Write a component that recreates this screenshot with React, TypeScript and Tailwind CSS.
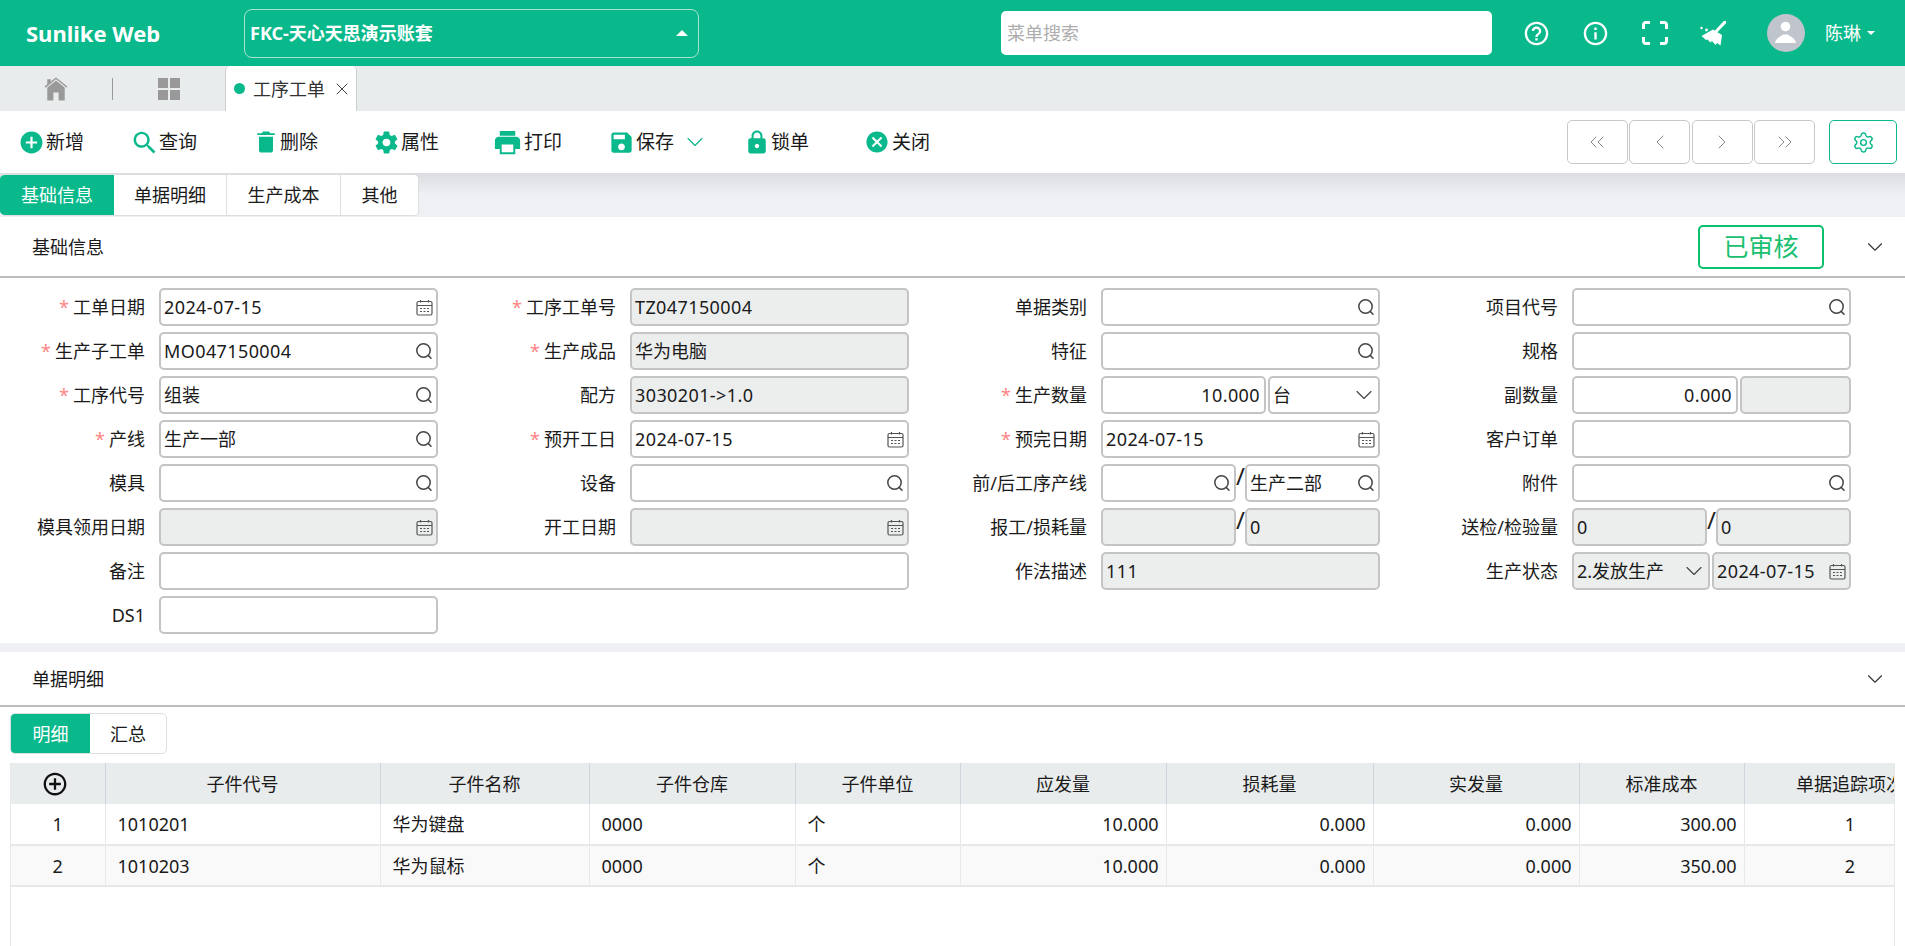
import type { ReactNode } from "react";
import {
  IoMdAddCircle,
  IoMdSearch,
  IoMdTrash,
  IoMdSettings,
  IoMdPrint,
  IoMdSave,
  IoMdLock,
  IoMdCloseCircle,
  IoIosHome,
  IoMdHelpCircleOutline,
  IoMdInformationCircleOutline,
  IoMdQrScanner,
  IoMdAddCircleOutline,
} from "react-icons/io";
import {
  ChevronDown,
  ChevronLeft,
  ChevronRight,
  ChevronsLeft,
  ChevronsRight,
  Settings,
  X,
} from "lucide-react";

const font = "font-['Noto_Sans','Noto_Sans_CJK_SC',sans-serif]";

function SearchGlyph() {
  return (
    <svg width="18" height="18" viewBox="0 0 18 18" fill="none" stroke="#444" strokeWidth="1.5" className="shrink-0">
      <circle cx="8.5" cy="8.5" r="6.7" />
      <path d="M13.2 13.4 L16 16.2" strokeLinecap="round" />
    </svg>
  );
}

function CalendarGlyph() {
  return (
    <svg width="17" height="17" viewBox="0 0 17 17" fill="none" stroke="#555" strokeWidth="1.2" className="shrink-0">
      <rect x="1" y="2.5" width="15" height="13.5" rx="1.5" />
      <path d="M1 6.5 H16 M4.5 1 V3.5 M12.5 1 V3.5" />
      <path d="M4 9.5 H6 M7.5 9.5 H9.5 M11 9.5 H13 M4 12.5 H6 M7.5 12.5 H9.5 M11 12.5 H13" strokeWidth="1" />
    </svg>
  );
}

function BroomGlyph() {
  return (
    <svg width="26" height="25" viewBox="0 0 26 25" fill="white" className="shrink-0">
      <path d="M25 1 L16.5 10" stroke="white" strokeWidth="3" strokeLinecap="round" />
      <path d="M1.5 15 L13 8.5 L22 14 L20.5 24.5 L17 22 L15.5 24 L12 20 L10.5 21.5 L7.5 18.5 L6 19 Z" />
      <circle cx="1.5" cy="7" r="1.2" />
      <circle cx="6.5" cy="9" r="1.4" />
    </svg>
  );
}

type Addon = "search" | "date" | "select" | undefined;

function Field({
  value = "",
  addon,
  disabled,
  right,
  className = "w-full",
}: {
  value?: string;
  addon?: Addon;
  disabled?: boolean;
  right?: boolean;
  className?: string;
}) {
  // the digits in the reference run a little wider than Noto's
  const latin = /^[\x20-\x7e]+$/.test(value);
  return (
    <div
      className={`flex h-[38px] shrink-0 items-center rounded-[5px] border-2 border-[#c4c4c4] pl-[3px] pr-[3px] ${
        disabled ? "bg-[#eceeee]" : "bg-white"
      } ${className}`}
    >
      <span
        className={`min-w-0 flex-1 whitespace-nowrap text-[#1a1a1a] ${latin ? "tracking-[0.4px]" : ""} ${
          right ? "pr-[1px] text-right" : ""
        }`}
      >
        {value}
      </span>
      {addon === "search" && <SearchGlyph />}
      {addon === "date" && <CalendarGlyph />}
      {addon === "select" && <ChevronDown size={28} strokeWidth={1} color="#444" className="-mr-[3px] shrink-0" />}
    </div>
  );
}

function Slash() {
  return <span className="flex h-[38px] w-[9px] shrink-0 justify-center text-[24px] text-[#222]">/</span>;
}

function Row({
  label,
  required,
  children,
  wide,
}: {
  label: string;
  required?: boolean;
  children: ReactNode;
  wide?: boolean;
}) {
  return (
    <div className={`flex h-[38px] ${wide ? "col-span-2" : ""}`}>
      <label className="flex h-[38px] w-[145px] shrink-0 items-center justify-end text-[#1a1a1a]">
        {required && <span className="mr-[4px] text-[#ff8585]">*</span>}
        {label}
      </label>
      <div className={`ml-[14px] flex h-[38px] ${wide ? "w-[750px]" : "w-[279px]"}`}>{children}</div>
    </div>
  );
}

const tools = [
  { label: "新增", icon: <IoMdAddCircle size={27} />, width: "w-[113px]", box: "w-[22px]" },
  { label: "查询", icon: <IoMdSearch size={29} />, width: "w-[123px]", box: "w-[22px]" },
  { label: "删除", icon: <IoMdTrash size={28} />, width: "w-[119px]", box: "w-[20px]" },
  { label: "属性", icon: <IoMdSettings size={27} />, width: "w-[120px]", box: "w-[22px]" },
  { label: "打印", icon: <IoMdPrint size={31} />, width: "w-[115px]", box: "w-[25px]" },
  { label: "保存", icon: <IoMdSave size={27} />, width: "w-[137px]", box: "w-[22px]", more: true },
  { label: "锁单", icon: <IoMdLock size={28} />, width: "w-[119px]", box: "w-[20px]" },
  { label: "关闭", icon: <IoMdCloseCircle size={26} />, width: "w-[100px]", box: "w-[22px]" },
];

const columns = [
  { label: "", width: "w-[94px]" },
  { label: "子件代号", width: "w-[275px]" },
  { label: "子件名称", width: "w-[209px]" },
  { label: "子件仓库", width: "w-[206px]" },
  { label: "子件单位", width: "w-[165px]" },
  { label: "应发量", width: "w-[206px]" },
  { label: "损耗量", width: "w-[207px]" },
  { label: "实发量", width: "w-[206px]" },
  { label: "标准成本", width: "w-[165px]" },
  { label: "单据追踪项次", width: "w-[212px]" },
];

const rows = [
  ["1", "1010201", "华为键盘", "0000", "个", "10.000", "0.000", "0.000", "300.00", "1"],
  ["2", "1010203", "华为鼠标", "0000", "个", "10.000", "0.000", "0.000", "350.00", "2"],
];

function PagerButton({ children }: { children: ReactNode }) {
  return (
    <button className="flex h-[44px] w-[61px] items-center justify-center rounded-[5px] border border-[#c8c8c8] bg-white text-[#888]">
      {children}
    </button>
  );
}

export default function App() {
  return (
    <div className={`flex h-[946px] w-[1905px] flex-col overflow-hidden bg-white text-[18px] leading-none ${font}`}>
      {/* top bar */}
      <header className="flex h-[66px] shrink-0 items-center bg-[#09b88b] text-white">
        <div className="ml-[26px] w-[218px] text-[22px] font-bold">Sunlike Web</div>
        <div className="flex h-[49px] w-[455px] items-center justify-between rounded-[8px] border border-[#a8e3d2] pl-[5px] pr-[10px]">
          <span className="font-bold">FKC-天心天思演示账套</span>
          <span className="h-0 w-0 border-x-[6px] border-b-[6px] border-x-transparent border-b-white" />
        </div>
        <div className="ml-[302px] flex h-[44px] w-[491px] items-center rounded-[5px] bg-white pl-[6px] text-[#aeaeae]">
          菜单搜索
        </div>
        <div className="ml-[30px] flex w-[28px] justify-center">
          <IoMdHelpCircleOutline size={29} className="shrink-0" />
        </div>
        <div className="ml-[31px] flex w-[28px] justify-center">
          <IoMdInformationCircleOutline size={29} className="shrink-0" />
        </div>
        <div className="ml-[31px] flex w-[30px] justify-center">
          <IoMdQrScanner size={32} className="shrink-0" />
        </div>
        <div className="ml-[30px] flex w-[26px] justify-center">
          <BroomGlyph />
        </div>
        <div className="ml-[41px] flex h-[38px] w-[38px] items-center justify-center rounded-full bg-[#c0c4cc]">
          <svg width="38" height="38" viewBox="0 0 38 38" fill="white">
            <circle cx="18.5" cy="12.5" r="4.8" />
            <path d="M8 29 C9 24 13 23 16 20.5 L21 20.5 C24 23 28 24 29 29 Z" />
          </svg>
        </div>
        <span className="ml-[20px]">陈琳</span>
        <span className="ml-[6px] h-0 w-0 border-x-[4px] border-t-[4px] border-x-transparent border-t-white" />
      </header>

      {/* open pages */}
      <div className="flex h-[45px] shrink-0 items-center bg-[#e9ecec]">
        <div className="ml-[42px] text-[#999]">
          <IoIosHome size={28} />
        </div>
        <div className="ml-[42px] h-[22px] w-px bg-[#999]" />
        <div className="ml-[45px] grid h-[22px] w-[22px] grid-cols-2 gap-[2px]">
          <span className="bg-[#999]" />
          <span className="bg-[#999]" />
          <span className="bg-[#999]" />
          <span className="bg-[#999]" />
        </div>
        <div className="ml-[45px] flex h-[45px] w-[132px] items-center rounded-t-[5px] border-x border-[#cfcfcf] bg-white pl-[8px]">
          <span className="h-[11px] w-[11px] rounded-full bg-[#09b88b]" />
          <span className="ml-[8px] text-[#333]">工序工单</span>
          <X size={20} strokeWidth={1.1} color="#333" className="ml-[7px] shrink-0" />
        </div>
      </div>

      {/* toolbar */}
      <div className="flex h-[62px] shrink-0 items-center bg-white pl-[20px] pr-[8px]">
        {tools.map((t) => (
          <button key={t.label} className={`flex shrink-0 items-center text-[19px] text-[#1a1a1a] ${t.width}`}>
            <span className={`flex shrink-0 justify-center text-[#09b88b] [&>svg]:shrink-0 ${t.box}`}>{t.icon}</span>
            <span className="ml-[4px]">{t.label}</span>
            {t.more && <ChevronDown size={28} strokeWidth={1} color="#09b88b" className="ml-[7px] shrink-0" />}
          </button>
        ))}
        <div className="ml-auto flex gap-[1.5px]">
          <PagerButton>
            <ChevronsLeft size={24} strokeWidth={1} />
          </PagerButton>
          <PagerButton>
            <ChevronLeft size={24} strokeWidth={1} />
          </PagerButton>
          <PagerButton>
            <ChevronRight size={24} strokeWidth={1} />
          </PagerButton>
          <PagerButton>
            <ChevronsRight size={24} strokeWidth={1} />
          </PagerButton>
        </div>
        <button className="ml-[14px] flex h-[44px] w-[68px] items-center justify-center rounded-[5px] border border-[#09b88b] text-[#09b88b]">
          <Settings size={23} strokeWidth={1.5} />
        </button>
      </div>

      {/* section tabs */}
      <div className="flex h-[44px] shrink-0 items-center bg-gradient-to-b from-[#dcdde1] via-[#eff0f4] to-[#eff0f4]">
        <div className="flex h-[42px] overflow-hidden rounded-[5px] border border-l-0 border-[#dcdee2] bg-white text-[#1a1a1a]">
          <span className="flex w-[114px] items-center justify-center bg-[#09b88b] text-white">基础信息</span>
          <span className="flex w-[113px] items-center justify-center border-r border-[#dcdee2]">单据明细</span>
          <span className="flex w-[114px] items-center justify-center border-r border-[#dcdee2]">生产成本</span>
          <span className="flex w-[77px] items-center justify-center">其他</span>
        </div>
      </div>

      {/* basic info */}
      <div className="flex h-[61px] shrink-0 items-center border-b-2 border-[#bdbdbd] bg-white pl-[32px] pr-[17px] text-[#1a1a1a]">
        <span>基础信息</span>
        <span className="ml-auto flex h-[44px] w-[126px] items-center justify-center rounded-[5px] border-2 border-[#0bbf6b] text-[25px] text-[#18c070]">
          已审核
        </span>
        <ChevronDown size={26} strokeWidth={1} color="#333" className="ml-[38px]" />
      </div>

      <div className="grid shrink-0 grid-cols-[repeat(4,471px)] gap-y-[6px] pb-[9px] pt-[10px]">
        <Row label="工单日期" required>
          <Field value="2024-07-15" addon="date" />
        </Row>
        <Row label="工序工单号" required>
          <Field value="TZ047150004" disabled />
        </Row>
        <Row label="单据类别">
          <Field addon="search" />
        </Row>
        <Row label="项目代号">
          <Field addon="search" />
        </Row>

        <Row label="生产子工单" required>
          <Field value="MO047150004" addon="search" />
        </Row>
        <Row label="生产成品" required>
          <Field value="华为电脑" disabled />
        </Row>
        <Row label="特征">
          <Field addon="search" />
        </Row>
        <Row label="规格">
          <Field />
        </Row>

        <Row label="工序代号" required>
          <Field value="组装" addon="search" />
        </Row>
        <Row label="配方">
          <Field value="3030201->1.0" disabled />
        </Row>
        <Row label="生产数量" required>
          <Field value="10.000" right className="w-[165px]" />
          <Field value="台" addon="select" className="ml-[2px] w-[112px]" />
        </Row>
        <Row label="副数量">
          <Field value="0.000" right className="w-[166px]" />
          <Field disabled className="ml-[2px] w-[111px]" />
        </Row>

        <Row label="产线" required>
          <Field value="生产一部" addon="search" />
        </Row>
        <Row label="预开工日" required>
          <Field value="2024-07-15" addon="date" />
        </Row>
        <Row label="预完日期" required>
          <Field value="2024-07-15" addon="date" />
        </Row>
        <Row label="客户订单">
          <Field />
        </Row>

        <Row label="模具">
          <Field addon="search" />
        </Row>
        <Row label="设备">
          <Field addon="search" />
        </Row>
        <Row label="前/后工序产线">
          <Field addon="search" className="w-[135px]" />
          <Slash />
          <Field value="生产二部" addon="search" className="w-[135px]" />
        </Row>
        <Row label="附件">
          <Field addon="search" />
        </Row>

        <Row label="模具领用日期">
          <Field addon="date" disabled />
        </Row>
        <Row label="开工日期">
          <Field addon="date" disabled />
        </Row>
        <Row label="报工/损耗量">
          <Field disabled className="w-[135px]" />
          <Slash />
          <Field value="0" disabled className="w-[135px]" />
        </Row>
        <Row label="送检/检验量">
          <Field value="0" disabled className="w-[135px]" />
          <Slash />
          <Field value="0" disabled className="w-[135px]" />
        </Row>

        <Row label="备注" wide>
          <Field />
        </Row>
        <Row label="作法描述">
          <Field value="111" disabled />
        </Row>
        <Row label="生产状态">
          <Field value="2.发放生产" addon="select" disabled className="w-[138px]" />
          <Field value="2024-07-15" addon="date" disabled className="ml-[2px] w-[139px]" />
        </Row>

        <Row label="DS1">
          <Field />
        </Row>
      </div>

      <div className="h-[9px] shrink-0 bg-[#eff0f4]" />

      {/* detail */}
      <div className="flex h-[55px] shrink-0 items-center justify-between border-b-2 border-[#bdbdbd] pl-[32px] pr-[17px] text-[#1a1a1a]">
        <span>单据明细</span>
        <ChevronDown size={26} strokeWidth={1} color="#333" />
      </div>

      <div className="ml-[10px] mt-[6px] flex h-[41px] w-[157px] shrink-0 overflow-hidden rounded-[5px] border border-[#dcdee2] text-[#1a1a1a]">
        <span className="flex w-[79px] items-center justify-center bg-[#09b88b] text-white">明细</span>
        <span className="flex flex-1 items-center justify-center">汇总</span>
      </div>

      <div className="ml-[10px] mt-[9px] w-[1885px] flex-1 overflow-hidden border-x border-[#e8e8e8]">
        <table className="w-[1945px] table-fixed border-collapse text-[#1a1a1a]">
          <thead>
            <tr className="h-[41px] bg-[#e9ecec]">
              {columns.map((c, i) => (
                <th key={i} className={`border-r border-[#cfd4de] font-normal whitespace-nowrap ${c.width}`}>
                  {i === 0 ? <IoMdAddCircleOutline size={28} color="#111" className="ml-[30px]" /> : c.label}
                </th>
              ))}
            </tr>
          </thead>
          <tbody>
            {rows.map((row, r) => (
              <tr key={r} className={`h-[41px] border-b-2 border-[#e8e8e8] ${r === 1 ? "bg-[#f9f9f9]" : "bg-white"}`}>
                {row.map((cell, i) => (
                  <td
                    key={i}
                    className={`border-r border-[#e8e8e8] ${
                      i === 0 || i === 9
                        ? "text-center"
                        : i >= 5 && i <= 8
                          ? "pr-[7px] text-right"
                          : "pl-[12px] text-left"
                    }`}
                  >
                    {cell}
                  </td>
                ))}
              </tr>
            ))}
          </tbody>
        </table>
      </div>
    </div>
  );
}
